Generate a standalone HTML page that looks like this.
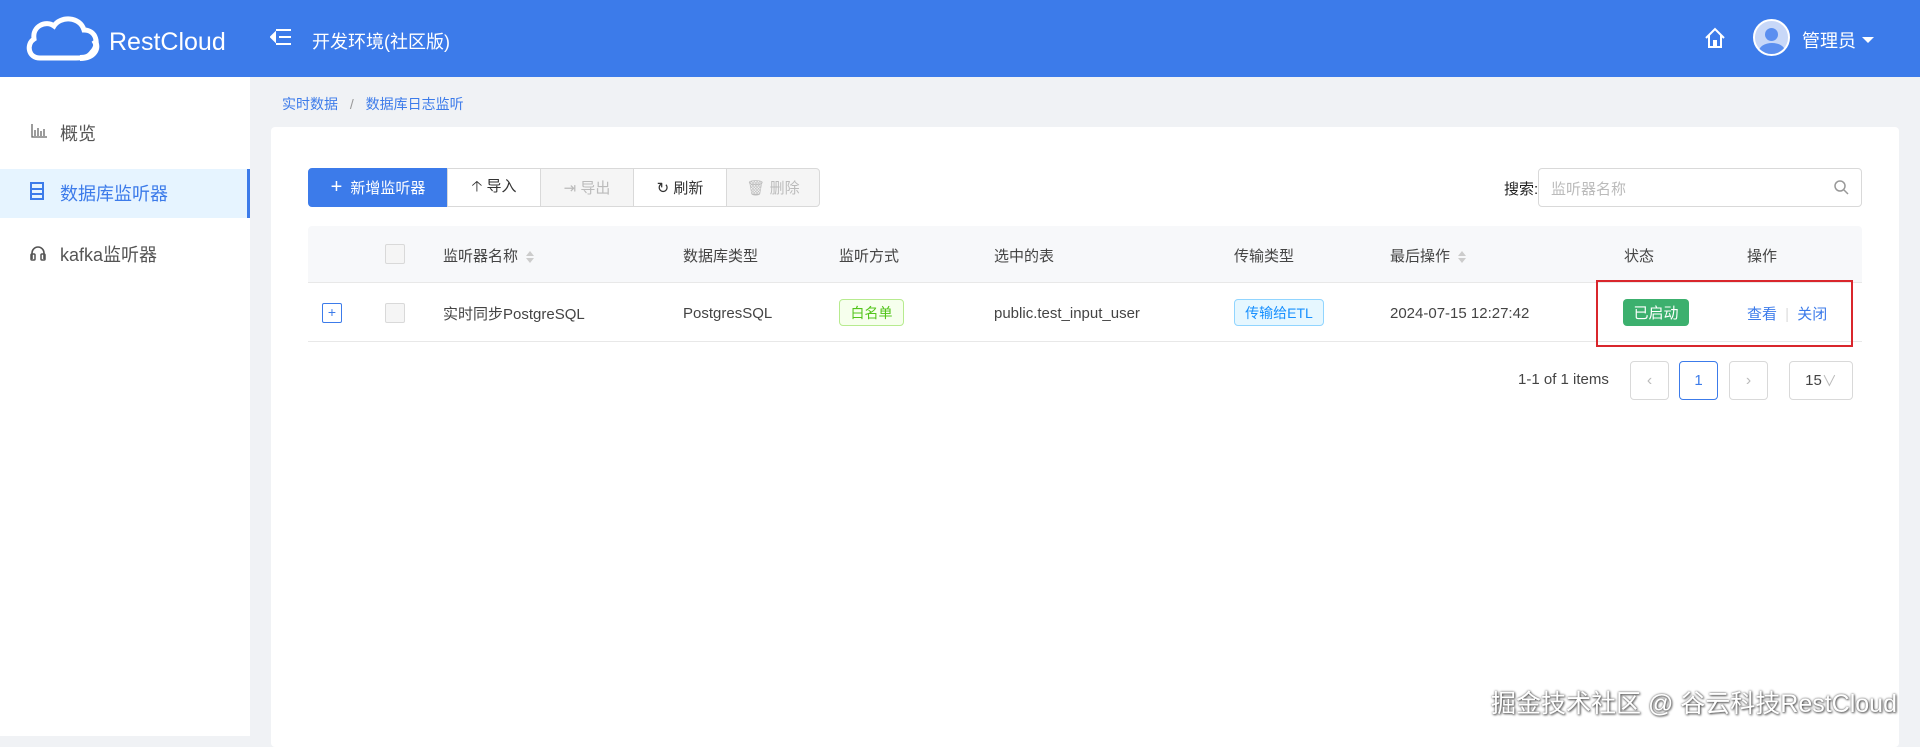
<!DOCTYPE html>
<html><head><meta charset="utf-8"><style>
*{box-sizing:border-box;margin:0;padding:0}
body{width:1920px;height:736px;overflow:hidden;background:#f0f2f5;font-family:"Liberation Sans","Noto Sans CJK SC",sans-serif;color:#333;position:relative;font-size:16px}
.abs{position:absolute}
.hdr{left:0;top:0;width:1920px;height:77px;background:#3c7bea;color:#fff}
.side{left:0;top:77px;width:250px;height:659px;background:#fff}
.card{left:271px;top:127px;width:1628px;height:620px;background:#fff;border-radius:4px}
.btn{top:168px;height:39px;border:1px solid #d9d9d9;background:#fff;display:flex;align-items:center;justify-content:center;font-size:15px;gap:8px}
.dis{color:#bbb;background:#f5f5f5}
.th{top:226px;height:57px;left:308px;width:1554px;background:#f7f8fa;border-bottom:1px solid #e8e8e8;border-radius:4px 4px 0 0}
.tr{top:283px;height:59px;left:308px;width:1554px;border-bottom:1px solid #e8e8e8}
.c{font-size:15px;color:#444;white-space:nowrap}
.cb{width:20px;height:20px;border:1px solid #d9d9d9;border-radius:2px;background:#f5f5f5}
.tag{height:27px;border-radius:4px;font-size:14px;display:flex;align-items:center;justify-content:center}
.pg{top:361px;height:39px;width:39px;border:1px solid #d9d9d9;border-radius:4px;background:#fff;display:flex;align-items:center;justify-content:center;color:#bbb;font-size:16px}
.sort{display:inline-block;vertical-align:middle;margin-left:8px;width:8px}
.sort i{display:block;width:0;height:0;border-left:4px solid transparent;border-right:4px solid transparent}
</style></head><body>
<div class="abs hdr">
 <svg class="abs" style="left:24px;top:14px" width="78" height="48" viewBox="0 0 78 48"><path d="M16 44 C4 44 2 30 10 25 C8 12 22 6 30 12 C36 2 56 2 60 16 C72 16 76 30 68 38 C64 44 58 44 52 44 Z" fill="none" stroke="#fff" stroke-width="5"/><path d="M56 44 C70 44 76 34 70 26" fill="none" stroke="#fff" stroke-width="6"/></svg>
 <div class="abs" style="left:109px;top:28px;font-size:25px">RestCloud</div>
 <svg class="abs" style="left:270px;top:28px" width="22" height="18" viewBox="0 0 22 18"><path d="M6 2H21M9 9H21M6 16H21M1 9l4-4v8z" stroke="#fff" stroke-width="2" fill="#fff"/></svg>
 <div class="abs" style="left:312px;top:28px;font-size:18px">开发环境(社区版)</div>
 <svg class="abs" style="left:1704px;top:27px" width="22" height="22" viewBox="0 0 22 22"><path d="M2 11L11 2l9 9M5 8v12h5v-6h2v6h5V8" fill="none" stroke="#fff" stroke-width="2"/></svg>
 <div class="abs" style="left:1753px;top:19px;width:37px;height:37px;border-radius:50%;background:#c8d8f8;border:2px solid #fff;overflow:hidden"><div style="margin:7px auto 0;width:13px;height:13px;border-radius:50%;background:#5b8ff0"></div><div style="margin:2px auto 0;width:26px;height:16px;border-radius:50% 50% 0 0;background:#5b8ff0"></div></div>
 <div class="abs" style="left:1802px;top:27px;font-size:18px">管理员</div>
 <div class="abs" style="left:1862px;top:37px;border-left:6px solid transparent;border-right:6px solid transparent;border-top:6px solid #fff"></div>
</div>
<div class="abs side">
 <svg class="abs" style="left:31px;top:47px" width="16" height="14" viewBox="0 0 16 14"><path d="M1 0V13H16M4 12V6M7 12V4M10 12V7M13 12V5" stroke="#666" stroke-width="1.3" fill="none"/></svg>
 <div class="abs" style="left:60px;top:43px;font-size:18px;color:#555">概览</div>
 <div class="abs" style="left:0;top:92px;width:250px;height:49px;background:#e6f4ff;border-right:3px solid #3c7bea"></div>
 <div class="abs" style="left:30px;top:105px;width:14px;height:18px;border:2px solid #3c7bea;background:linear-gradient(#3c7bea,#3c7bea) 0 4px/100% 2px no-repeat,linear-gradient(#3c7bea,#3c7bea) 0 9px/100% 2px no-repeat"></div>
 <div class="abs" style="left:60px;top:103px;font-size:18px;color:#3c7bea">数据库监听器</div>
 <svg class="abs" style="left:30px;top:168px" width="16" height="16" viewBox="0 0 16 16"><path d="M2 14V8a6 6 0 0 1 12 0v6" fill="none" stroke="#555" stroke-width="1.6"/><rect x="1" y="9" width="4" height="6" rx="1" fill="none" stroke="#555" stroke-width="1.5"/><rect x="11" y="9" width="4" height="6" rx="1" fill="none" stroke="#555" stroke-width="1.5"/></svg>
 <div class="abs" style="left:60px;top:164px;font-size:18px;color:#555">kafka监听器</div>
</div>
<div class="abs" style="left:282px;top:94px;font-size:14px;color:#3c7bea">实时数据 <span style="color:#999;margin:0 8px">/</span> 数据库日志监听</div>
<div class="abs card"></div>
<div class="abs btn" style="left:308px;width:140px;background:#3c7bea;border-color:#3c7bea;color:#fff;border-radius:4px 0 0 4px"><span style="font-size:20px">+</span>新增监听器</div>
<div class="abs btn" style="left:447px;width:94px">🡡 导入</div>
<div class="abs btn dis" style="left:540px;width:94px">⇥ 导出</div>
<div class="abs btn" style="left:633px;width:94px">↻ 刷新</div>
<div class="abs btn dis" style="left:726px;width:94px;border-radius:0 4px 4px 0">🗑︎ 删除</div>
<div class="abs" style="left:1504px;top:178px;font-size:15px;color:#222">搜索:</div>
<div class="abs" style="left:1538px;top:168px;width:324px;height:39px;border:1px solid #d9d9d9;border-radius:4px;color:#bbb;font-size:15px;padding:9px 12px">监听器名称<svg class="abs" style="right:12px;top:11px" width="15" height="15" viewBox="0 0 15 15"><circle cx="6" cy="6" r="5" fill="none" stroke="#999" stroke-width="1.5"/><path d="M10 10l4 4" stroke="#999" stroke-width="1.5"/></svg></div>
<div class="abs th"></div>
<div class="abs cb" style="left:385px;top:244px"></div>
<div class="abs c" style="left:443px;top:245px">监听器名称<span class="sort"><i style="border-bottom:5px solid #ccc;margin-bottom:2px"></i><i style="border-top:5px solid #ccc"></i></span></div>
<div class="abs c" style="left:683px;top:245px">数据库类型</div>
<div class="abs c" style="left:839px;top:245px">监听方式</div>
<div class="abs c" style="left:994px;top:245px">选中的表</div>
<div class="abs c" style="left:1234px;top:245px">传输类型</div>
<div class="abs c" style="left:1390px;top:245px">最后操作<span class="sort"><i style="border-bottom:5px solid #ccc;margin-bottom:2px"></i><i style="border-top:5px solid #ccc"></i></span></div>
<div class="abs c" style="left:1624px;top:245px">状态</div>
<div class="abs c" style="left:1747px;top:245px">操作</div>
<div class="abs tr"></div>
<div class="abs" style="left:322px;top:303px;width:20px;height:20px;border:1px solid #3c7bea;border-radius:2px;color:#3c7bea;font-size:14px;text-align:center;line-height:17px">+</div>
<div class="abs cb" style="left:385px;top:303px"></div>
<div class="abs c" style="left:443px;top:303px">实时同步PostgreSQL</div>
<div class="abs c" style="left:683px;top:305px">PostgresSQL</div>
<div class="abs tag" style="left:839px;top:299px;width:65px;background:#f6ffed;border:1px solid #b7eb8f;color:#52c41a">白名单</div>
<div class="abs c" style="left:994px;top:305px">public.test_input_user</div>
<div class="abs tag" style="left:1234px;top:299px;width:90px;background:#e6f7ff;border:1px solid #91d5ff;color:#1890ff">传输给ETL</div>
<div class="abs c" style="left:1390px;top:305px">2024-07-15 12:27:42</div>
<div class="abs tag" style="left:1623px;top:299px;width:66px;background:#3cb06e;color:#fff;font-size:15px">已启动</div>
<div class="abs c" style="left:1747px;top:303px;color:#3c7bea">查看 <span style="color:#ddd;margin:0 4px">|</span> 关闭</div>
<div class="abs" style="left:1596px;top:280px;width:257px;height:67px;border:2px solid #d9262c"></div>
<div class="abs c" style="left:1518px;top:371px">1-1 of 1 items</div>
<div class="abs pg" style="left:1630px">‹</div>
<div class="abs pg" style="left:1679px;border-color:#3c7bea;color:#3c7bea;font-size:15px">1</div>
<div class="abs pg" style="left:1729px">›</div>
<div class="abs pg" style="left:1789px;width:64px;color:#444;font-size:15px">15<span style="color:#bbb">∨</span></div>
<div class="abs" style="left:1491px;top:684px;font-size:25px;color:#fff;text-shadow:0 0 2px #555,1px 1px 2px #555;white-space:nowrap">掘金技术社区 @ 谷云科技RestCloud</div>
</body></html>
